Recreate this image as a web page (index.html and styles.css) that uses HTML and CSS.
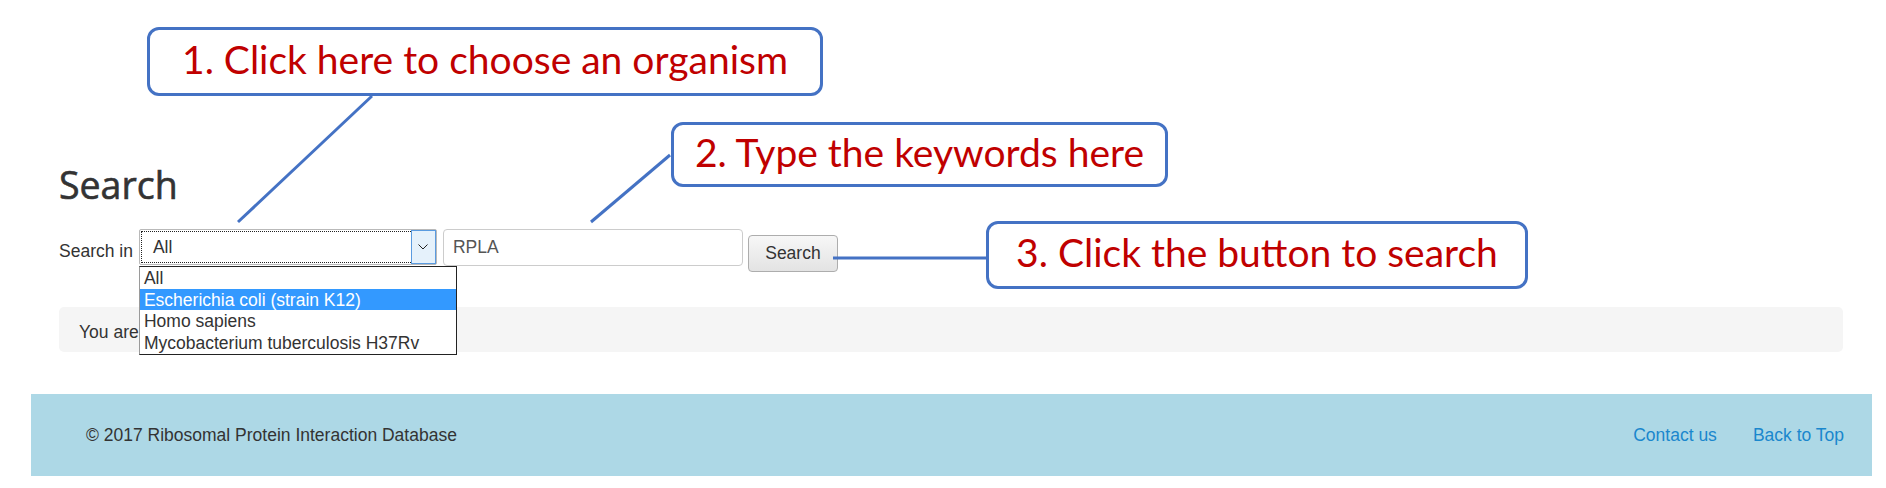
FILE: index.html
```html
<!DOCTYPE html>
<html lang="en">
<head>
    <meta charset="UTF-8">
    <title>Search - Ribosomal Protein Interaction Database</title>
    <link rel="stylesheet" href="styles.css">
</head>
<body>
    <div class="page">
        <main class="content">
            <h2 class="title">Search</h2>
            <form class="search-form">
                <label class="search-label">Search in</label>
                <div class="select">
                    <div class="select-box">
                        <div class="select-inner">
                            <span class="select-value">All</span>
                            <span class="select-arrow">
                                <svg width="10" height="6" viewBox="0 0 10 6"><polyline points="0.5,0.5 5,5 9.5,0.5" fill="none" stroke="#222" stroke-width="1"/></svg>
                            </span>
                        </div>
                    </div>
                    <ul class="select-list">
                        <li>All</li>
                        <li class="selected">Escherichia coli (strain K12)</li>
                        <li>Homo sapiens</li>
                        <li>Mycobacterium tuberculosis H37Rv</li>
                    </ul>
                </div>
                <input type="text" class="keyword" value="RPLA">
                <button type="button" class="search-btn">Search</button>
            </form>
            <div class="breadcrumb">You are</div>
        </main>

        <footer class="footer">
            <span>&copy; 2017 Ribosomal Protein Interaction Database</span>
            <nav class="footer-links">
                <a href="#">Contact us</a>
                <a href="#">Back to Top</a>
            </nav>
        </footer>

        <!-- annotation layer -->
        <svg class="leaders" width="1886" height="488" viewBox="0 0 1886 488">
            <line x1="372" y1="96" x2="238" y2="222"/>
            <line x1="670" y1="155" x2="591" y2="222"/>
            <line x1="833" y1="258" x2="986" y2="258"/>
        </svg>
        <div class="callout callout-1">1. Click here to choose an organism</div>
        <div class="callout callout-2">2. Type the keywords here</div>
        <div class="callout callout-3">3. Click the button to search</div>
    </div>
</body>
</html>
```

FILE: styles.css
```css
body {
    margin: 0;
    font-family: 'Liberation Sans', Arial, sans-serif;
    font-size: 17.5px;
    color: #333;
    background-color: #fff;
}
.page {
    position: relative;
    width: 1886px;
    height: 488px;
    overflow: hidden;
}
.content {
    padding: 164px 43px 0 59px;
}
.title {
    margin: 0 0 24px;
    font-family: 'Open Sans', sans-serif;
    font-size: 37.5px;
    font-weight: 400;
    line-height: 41px;
    color: #333;
    -webkit-text-stroke: 0.6px #333;
}
.search-form {
    display: flex;
    align-items: flex-start;
}
.search-label {
    margin-top: 12px;
    margin-right: 6px;
    line-height: 20px;
}
.select {
    position: relative;
    width: 298px;
    margin-right: 6px;
}
.select-box {
    box-sizing: border-box;
    height: 36px;
    border: 1px solid #b9b9b9;
    border-radius: 2px;
    padding: 1px;
}
.select-inner {
    display: flex;
    height: 100%;
    box-sizing: border-box;
    border: 1px dotted #222;
}
.select-value {
    flex: 1;
    padding-left: 11px;
    line-height: 30px;
}
.select-arrow {
    display: flex;
    align-items: center;
    justify-content: center;
    width: 25px;
    margin: -2px -2px -2px 0;
    box-sizing: border-box;
    background-color: #e5f1fb;
    border: 1px solid #5a9be0;
}
.select-list {
    position: absolute;
    top: 37px;
    left: 0;
    width: 318px;
    margin: 0;
    padding: 0;
    list-style: none;
    box-sizing: border-box;
    background-color: #fff;
    border: 1px solid #222;
    border-left-color: #9a9a9a;
    z-index: 2;
}
.select-list li {
    height: 21.7px;
    line-height: 22px;
    padding-left: 4px;
    white-space: nowrap;
}
.select-list li.selected {
    background-color: #3399ff;
    color: #fff;
}
.keyword {
    box-sizing: border-box;
    width: 300px;
    height: 37px;
    margin: 0 5px 0 0;
    padding: 0 9px;
    border: 1px solid #ccc;
    border-radius: 4px;
    font: inherit;
    color: #555;
}
.search-btn {
    box-sizing: border-box;
    width: 90px;
    height: 37px;
    margin-top: 6px;
    padding: 0;
    border: 1px solid #adadad;
    border-radius: 4px;
    background: linear-gradient(#f7f7f7, #e3e3e3);
    font: inherit;
    color: #333;
}
.breadcrumb {
    margin-top: 35px;
    padding: 13px 20px 7px;
    line-height: 25px;
    background-color: #f5f5f5;
    border-radius: 5px;
}
.footer {
    display: flex;
    justify-content: space-between;
    margin: 42px 14px 0 31px;
    padding: 29px 28px 28px 55px;
    line-height: 25px;
    background-color: #add8e6;
}
.footer-links {
    display: flex;
    gap: 36px;
}
.footer-links a {
    color: #1a87cd;
    text-decoration: none;
}
.leaders {
    position: absolute;
    top: 0;
    left: 0;
    pointer-events: none;
}
.leaders line {
    stroke: #4472c4;
    stroke-width: 3;
}
.callout {
    position: absolute;
    box-sizing: border-box;
    display: flex;
    align-items: center;
    justify-content: center;
    padding-bottom: 5px;
    border: 3px solid #4472c4;
    border-radius: 12px;
    background-color: #fff;
    font-family: Lato, sans-serif;
    font-size: 39px;
    line-height: 1;
    color: #c00000;
    white-space: nowrap;
}
.callout-1 {
    left: 147px;
    top: 27px;
    width: 676px;
    height: 69px;
}
.callout-2 {
    left: 671px;
    top: 122px;
    width: 497px;
    height: 65px;
}
.callout-3 {
    left: 986px;
    top: 221px;
    width: 542px;
    height: 68px;
}
```
